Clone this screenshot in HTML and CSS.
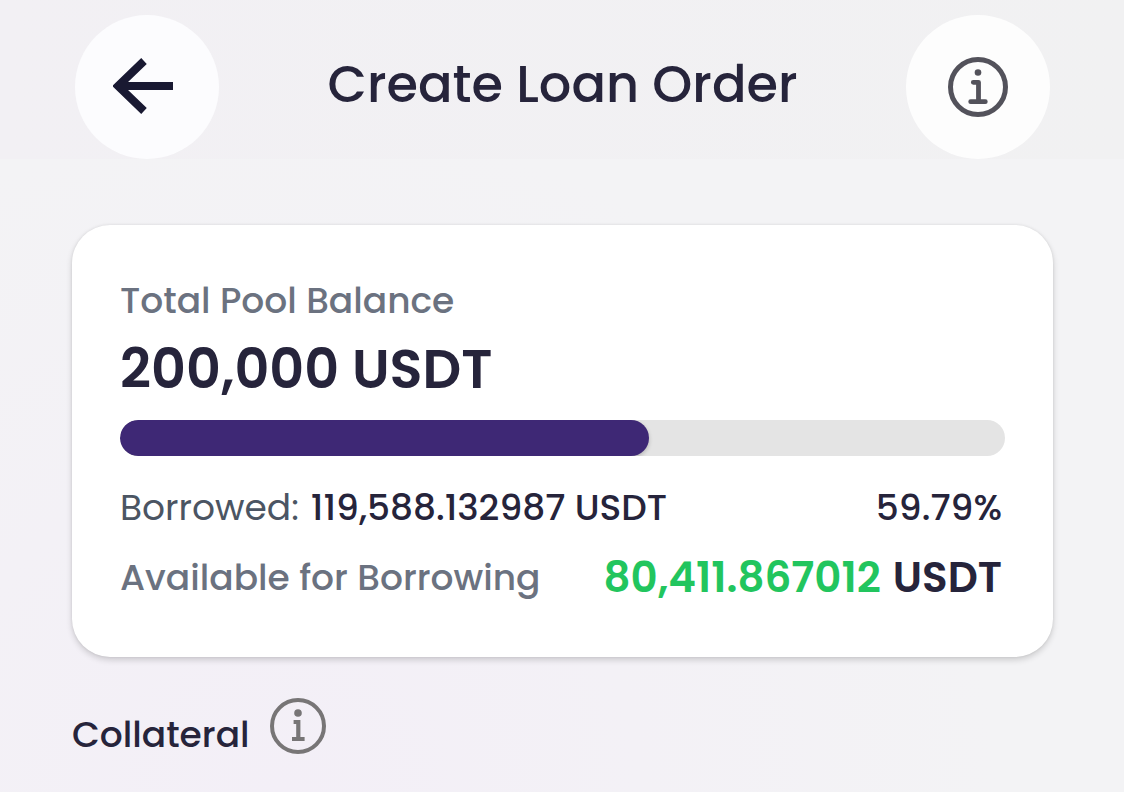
FILE: index.html
```html
<!DOCTYPE html>
<html lang="en">
<head>
<meta charset="utf-8">
<meta name="viewport" content="width=device-width, initial-scale=1">
<title>Create Loan Order</title>
<link rel="stylesheet" href="styles.css">
</head>
<body>
<header class="topbar">
  <button class="round-button" type="button" aria-label="Back">
    <svg class="arrow-icon" viewBox="0 0 68 60" aria-hidden="true">
      <path d="M31 4 5 29 31 54M5 29H60" fill="none" stroke="currentColor" stroke-width="8"/>
    </svg>
  </button>
  <h1 class="title">Create Loan Order</h1>
  <button class="round-button round-button-info" type="button" aria-label="About loan orders">
    <svg class="info-icon" viewBox="0 0 60 60" aria-hidden="true">
      <circle cx="30" cy="30" r="27.5" fill="none" stroke="currentColor" stroke-width="5"/>
      <circle cx="30" cy="15.5" r="3.3" fill="currentColor"/>
      <path d="M25.3 25.3H30.5V44.5M22.7 44.7H37.3" fill="none" stroke="currentColor" stroke-width="4.8" stroke-linecap="round" stroke-linejoin="round"/>
    </svg>
  </button>
</header>
<main class="content">
  <section class="card">
    <p class="label" id="pool-label">Total Pool Balance</p>
    <p class="balance">200,000 USDT</p>
    <div class="track" role="progressbar" aria-labelledby="pool-label" aria-valuemin="0" aria-valuemax="100" aria-valuenow="59.79">
      <div class="fill" style="width: 59.79%"></div>
    </div>
    <div class="row">
      <p class="pair"><span class="borrowed-label">Borrowed:</span> <span class="amount">119,588.132987 USDT</span></p>
      <p class="amount">59.79%</p>
    </div>
    <div class="row">
      <p class="label">Available for Borrowing</p>
      <p class="pair available"><span class="positive">80,411.867012</span> <span>USDT</span></p>
    </div>
  </section>
  <div class="section-head">
    <h2 class="section-title">Collateral</h2>
    <button class="plain-button" type="button" aria-label="About collateral">
      <svg class="info-icon-small" viewBox="0 0 56 56" aria-hidden="true">
        <circle cx="28" cy="28" r="26" fill="none" stroke="currentColor" stroke-width="4"/>
        <circle cx="28" cy="15" r="3.8" fill="currentColor"/>
        <path d="M23.6 24H28.3V41M22 41H34.6" fill="none" stroke="currentColor" stroke-width="4.2"/>
      </svg>
    </button>
  </div>
</main>
</body>
</html>
```
FILE: styles.css
```css
* {
  box-sizing: border-box;
}

body {
  margin: 0;
  min-height: 100vh;
  color: #26243b;
  background:
    radial-gradient(ellipse at 25% 100%, #f3eff7 0%, rgba(243, 239, 247, 0) 60%),
    #f3f3f5;
  font-family: Poppins, Inter, "Open Sans", sans-serif;
  font-size: 36px;
  line-height: 52px;
}

h1,
h2,
p {
  margin: 0;
}

button {
  padding: 0;
  border: 0;
  font: inherit;
  cursor: pointer;
}

.topbar {
  display: flex;
  align-items: center;
  justify-content: space-between;
  padding: 15px 74px 0 75px;
  background: linear-gradient(90deg, #f2f0f4, #f1f1f2);
}

.round-button {
  display: grid;
  place-items: center;
  width: 144px;
  height: 144px;
  border-radius: 50%;
  color: #191932;
  background: #fcfcfe;
}

.round-button-info {
  color: #53525b;
  background: #fdfdfd;
}

.arrow-icon {
  width: 68px;
  height: 60px;
}

.info-icon {
  width: 60px;
  height: 60px;
}

.title {
  padding-bottom: 6px;
  font-size: 51px;
  font-weight: 500;
  line-height: 64px;
}

.content {
  padding: 66px 71px 24px 72px;
}

.card {
  padding: 50px 48px 53px;
  border-radius: 38px;
  background: #fff;
  box-shadow: 0 3px 6px rgba(0, 0, 0, 0.16), 0 0 3px rgba(0, 0, 0, 0.08);
}

.label {
  color: #6b7280;
  font-weight: 500;
}

.balance {
  font-size: 54px;
  font-weight: 600;
  line-height: 84px;
}

.track {
  height: 36px;
  margin: 9px 0 26px;
  overflow: hidden;
  border-radius: 18px;
  background: #e4e4e4;
}

.fill {
  height: 100%;
  border-radius: 18px;
  background: #3e2875;
  box-shadow: 0 2px 4px rgba(0, 0, 0, 0.2);
}

.row {
  display: flex;
  justify-content: space-between;
  align-items: center;
  padding-right: 3px;
}

.row + .row {
  margin-top: 18px;
}

.pair {
  display: flex;
  gap: 12px;
}

.borrowed-label {
  color: #4b5563;
}

.amount {
  font-weight: 500;
}

.available {
  font-size: 42px;
  font-weight: 600;
}

.positive {
  color: #22c55e;
}

.section-head {
  display: flex;
  align-items: flex-start;
  gap: 20px;
  padding-top: 41px;
}

.section-title {
  padding-top: 11px;
  font-size: 36px;
  font-weight: 500;
}

.plain-button {
  display: grid;
  color: #777576;
  background: transparent;
}

.info-icon-small {
  width: 56px;
  height: 56px;
}
```
